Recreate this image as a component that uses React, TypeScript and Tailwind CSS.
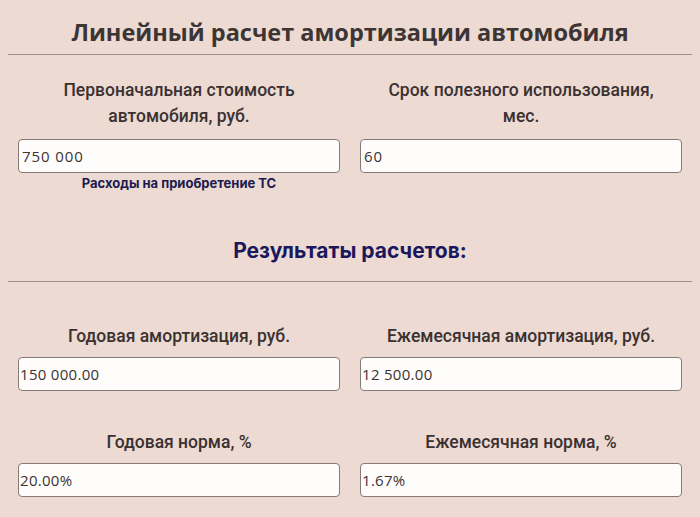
export default function App() {
  return (
    <div className="w-[700px] h-[517px] overflow-hidden bg-[#ecdad3] font-['Open_Sans',sans-serif] text-[#3b3131]">
      {/* Title */}
      <h1 className="pt-[17px] text-center text-[23.5px] leading-[30px] font-bold text-[#3d3434]">
        Линейный расчет амортизации автомобиля
      </h1>
      <div className="mx-2 mt-[7px] h-px bg-[#9d918c]" />

      {/* Inputs */}
      <div className="grid grid-cols-2 gap-x-5 px-[18px] pt-[22px]">
        <div className="flex flex-col">
          <label className="h-[52px] text-center text-[17.5px] leading-[26px] font-medium font-['Roboto',sans-serif]">
            Первоначальная стоимость
            <br />
            автомобиля, руб.
          </label>
          <input
            readOnly
            value="750 000"
            className="mt-[10px] h-[34px] rounded-[4px] border-[1.5px] border-[#857a78] bg-[#fffdfb] px-[3px] text-[15px] tracking-[0.06em] font-normal text-[#3a3434] outline-none"
          />
          <p className="mt-[1px] text-center text-[13px] leading-[18px] font-bold text-[#1d1a4e] font-['Inter',sans-serif]">
            Расходы на приобретение ТС
          </p>
        </div>
        <div className="flex flex-col">
          <label className="h-[52px] text-center text-[17.5px] leading-[26px] font-medium font-['Roboto',sans-serif]">
            Срок полезного использования,
            <br />
            мес.
          </label>
          <input
            readOnly
            value="60"
            className="mt-[10px] h-[34px] rounded-[4px] border-[1.5px] border-[#857a78] bg-[#fffdfb] px-[3px] text-[15px] tracking-[0.06em] font-normal text-[#3a3434] outline-none"
          />
        </div>
      </div>

      {/* Results */}
      <h2 className="mt-[45px] text-center text-[21px] leading-[28px] font-bold text-[#1b175c] font-['Inter',sans-serif]">
        Результаты расчетов:
      </h2>
      <div className="mx-2 mt-[16px] h-px bg-[#9d918c]" />

      <div className="grid grid-cols-2 gap-x-5 gap-y-[38px] px-[18px] pt-[41px]">
        <ResultField label="Годовая амортизация, руб." value="150 000.00" />
        <ResultField label="Ежемесячная амортизация, руб." value="12 500.00" />
        <ResultField label="Годовая норма, %" value="20.00%" />
        <ResultField label="Ежемесячная норма, %" value="1.67%" />
      </div>
    </div>
  );
}

function ResultField({ label, value }: { label: string; value: string }) {
  return (
    <div className="flex flex-col">
      <label className="text-center text-[17.5px] leading-[26px] font-medium font-['Roboto',sans-serif]">
        {label}
      </label>
      <input
        readOnly
        value={value}
        className="mt-[8px] h-[34px] rounded-[4px] border-[1.5px] border-[#857a78] bg-[#fffdfb] px-[1px] text-[15px] tracking-[0.02em] font-normal text-[#3a3434] outline-none"
      />
    </div>
  );
}
